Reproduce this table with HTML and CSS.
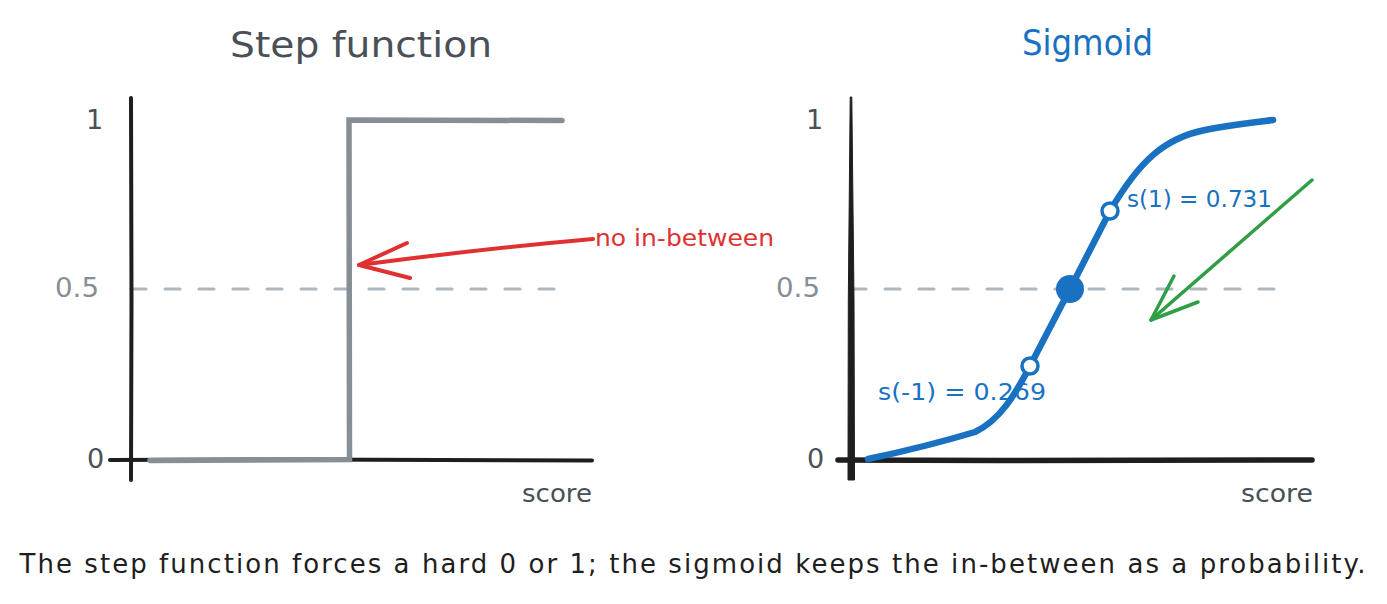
FILE: index.html
```html
<!DOCTYPE html>
<html lang="en">
<head>
<meta charset="utf-8">
<title>Step function vs Sigmoid</title>
<link rel="stylesheet" href="styles.css">
</head>
<body>
<figure class="figure">
  <svg class="charts" width="1387" height="546" viewBox="0 0 1387 546" xmlns="http://www.w3.org/2000/svg">
    <!-- Left chart: step function -->
    <g class="chart chart-step">
      <text class="title title-step" x="230" y="57" textLength="262" lengthAdjust="spacingAndGlyphs">Step function</text>
      <line class="dash" x1="131" y1="289" x2="556" y2="289"/>
      <path class="axis" d="M131 98 L131.5 300 L131 480"/>
      <path class="axis" d="M110 460 L300 459.5 L592 460.5"/>
      <text class="tick" x="86" y="129">1</text>
      <text class="tick tick-mid" x="55" y="297" textLength="44" lengthAdjust="spacingAndGlyphs">0.5</text>
      <text class="tick" x="87" y="468">0</text>
      <path class="step" d="M150 460.5 L349.5 459.5 L349 120 L562 120.5"/>
      <path class="arrow-red" d="M593 239 Q480 249 359 265"/>
      <path class="arrow-red" d="M407 243 L359 265 L410 278"/>
      <text class="note note-red" x="595" y="246" textLength="179" lengthAdjust="spacingAndGlyphs">no in-between</text>
      <text class="score" x="522" y="502" textLength="70" lengthAdjust="spacingAndGlyphs">score</text>
    </g>
    <!-- Right chart: sigmoid -->
    <g class="chart chart-sigmoid">
      <text class="title title-sig" x="1022" y="55" textLength="131" lengthAdjust="spacingAndGlyphs">Sigmoid</text>
      <line class="dash" x1="851" y1="289" x2="1278" y2="289"/>
      <path class="axis-fill" d="M850.2 97 L851.8 97 L854 300 L854.5 480 L848 480 L848.3 300 Z"/>
      <path class="axis axis-thick" d="M838 460 L1000 460.5 L1312 460"/>
      <text class="tick" x="806" y="129">1</text>
      <text class="tick tick-mid" x="776" y="297" textLength="44" lengthAdjust="spacingAndGlyphs">0.5</text>
      <text class="tick" x="807" y="468">0</text>
      <path class="sigmoid" d="M868 459 Q925 447 975 432 C1000 420 1015 395 1030 366 L1070 289 L1110 211 C1140 160 1165 138 1205 130 C1230 125 1250 123 1273 120"/>
      <circle class="pt-open" cx="1030" cy="366" r="8"/>
      <circle class="pt-open" cx="1110" cy="211" r="8"/>
      <circle class="pt-fill" cx="1070" cy="289" r="14"/>
      <text class="note note-blue" x="1127" y="207" textLength="145" lengthAdjust="spacingAndGlyphs">s(1) = 0.731</text>
      <text class="note note-blue" x="878" y="400" textLength="168" lengthAdjust="spacingAndGlyphs">s(-1) = 0.269</text>
      <path class="arrow-green" d="M1312 180 L1151 320"/>
      <path class="arrow-green" d="M1174 276 L1151 320 L1198 302"/>
      <text class="score" x="1241" y="502" textLength="72" lengthAdjust="spacingAndGlyphs">score</text>
    </g>
  </svg>
  <figcaption class="caption">The step function forces a hard 0 or 1; the sigmoid keeps the in-between as a probability.</figcaption>
</figure>
</body>
</html>
```
FILE: styles.css
```css
html, body {
  margin: 0;
  padding: 0;
  background: #ffffff;
}

body {
  width: 1387px;
  height: 604px;
  overflow: hidden;
  font-family: "DejaVu Sans", "Liberation Sans", sans-serif;
}

.figure {
  margin: 0;
  display: flex;
  flex-direction: column;
  align-items: center;
}

.charts {
  display: block;
}

.title {
  font-family: "DejaVu Sans", sans-serif;
  font-size: 36px;
}

.title-step {
  fill: #495057;
}

.title-sig {
  fill: #1971c2;
}

.tick {
  font-family: "DejaVu Sans", sans-serif;
  font-size: 27px;
  fill: #495057;
}

.tick-mid {
  fill: #868e96;
}

.score {
  font-family: "DejaVu Sans", sans-serif;
  font-size: 25px;
  fill: #495057;
}

.note {
  font-family: "DejaVu Sans", sans-serif;
  font-size: 23px;
}

.note-red {
  fill: #e03131;
}

.note-blue {
  fill: #1971c2;
}

.axis {
  fill: none;
  stroke: #1e1e1e;
  stroke-width: 4;
  stroke-linecap: round;
  stroke-linejoin: round;
}

.axis-thick {
  stroke-width: 5.5;
}

.axis-fill {
  fill: #1e1e1e;
  stroke: #1e1e1e;
  stroke-width: 1;
  stroke-linejoin: round;
}

.dash {
  stroke: #adb5bd;
  stroke-width: 3;
  stroke-dasharray: 15 19;
  stroke-linecap: round;
}

.step {
  fill: none;
  stroke: #868e96;
  stroke-width: 5.5;
  stroke-linecap: round;
  stroke-linejoin: miter;
}

.arrow-red {
  fill: none;
  stroke: #e03131;
  stroke-width: 4;
  stroke-linecap: round;
  stroke-linejoin: round;
}

.arrow-green {
  fill: none;
  stroke: #2f9e44;
  stroke-width: 3.5;
  stroke-linecap: round;
  stroke-linejoin: round;
}

.sigmoid {
  fill: none;
  stroke: #1971c2;
  stroke-width: 6.5;
  stroke-linecap: round;
  stroke-linejoin: round;
}

.pt-open {
  fill: #ffffff;
  stroke: #1971c2;
  stroke-width: 3.5;
}

.pt-fill {
  fill: #1971c2;
}

.caption {
  margin: 0;
  font-family: "DejaVu Sans", sans-serif;
  font-size: 26px;
  line-height: 36px;
  color: #1e1e1e;
  letter-spacing: 2.05px;
  white-space: nowrap;
}
```
